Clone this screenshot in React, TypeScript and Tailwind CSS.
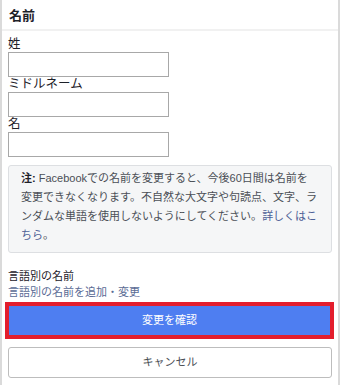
import React from "react"

const font = "font-['Liberation_Sans','Noto_Sans_CJK_JP',sans-serif]"

function Field({ label }: { label: string }) {
  return (
    <div>
      <p className="text-[12.5px] leading-[15px] text-[#1d2129]">{label}</p>
      <div className="h-[25px] w-[161px] border border-[#a8a8a8] bg-white" />
    </div>
  )
}

export default function App() {
  return (
    <div className={`${font} h-[385px] w-[340px] overflow-hidden border-x-2 border-[#dadada] bg-white`}>
      <header className="flex h-[31px] items-center border-b-2 border-[#f1f1f1] px-[7px] pt-[2px]">
        <h1 className="text-[13px] font-bold text-[#1d2129]">名前</h1>
      </header>

      <div className="px-[6px] pt-[6px]">
        <Field label="姓" />
        <Field label="ミドルネーム" />
        <Field label="名" />

        <div className="mt-[8px] rounded-[3px] border border-[#dddfe2] bg-[#f5f6f7] px-[12px] pb-[7px] pt-[3px] text-[11px] leading-[19px] text-[#4b4f56]">
          <span className="font-bold text-[#1d2129]">注:</span> Facebookでの名前を変更すると、今後60日間は名前を
          <br />
          変更できなくなります。不自然な大文字や句読点、文字、ラ
          <br />
          ンダムな単語を使用しないようにしてください。
          <a className="text-[#4e6196]">詳しくはこ<br />ちら</a>。
        </div>

        <div className="mt-[15px] text-[11px] leading-[16px]">
          <p className="text-[#1d2129]">言語別の名前</p>
          <a className="block text-[#5a6b95]">言語別の名前を追加・変更</a>
        </div>
      </div>

      <div className="ml-[3px] mr-[4px] mt-[2px] border-4 border-[#e31e2d]">
        <button className="flex h-[29px] w-full items-center justify-center bg-[#4e7ef1] text-[11px] text-white">
          変更を確認
        </button>
      </div>

      <div className="px-[6px] pt-[8px]">
        <button className="flex h-[31px] w-full items-center justify-center rounded-[3px] border border-[#bdbdbd] bg-white text-[11px] text-[#4b4f56]">
          キャンセル
        </button>
      </div>
    </div>
  )
}
